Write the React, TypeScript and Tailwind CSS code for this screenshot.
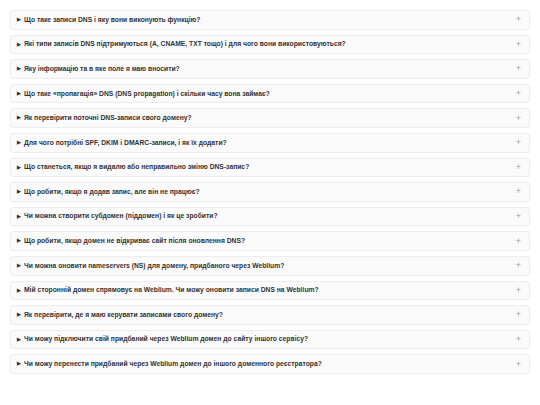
const questions = [
  'Що таке записи DNS і яку вони виконують функцію?',
  'Які типи записів DNS підтримуються (A, CNAME, TXT тощо) і для чого вони використовуються?',
  'Яку інформацію та в яке поле я маю вносити?',
  'Що таке «пропагація» DNS (DNS propagation) і скільки часу вона займає?',
  'Як перевірити поточні DNS-записи свого домену?',
  'Для чого потрібні SPF, DKIM і DMARC-записи, і як їх додати?',
  'Що станеться, якщо я видалю або неправильно зміню DNS-запис?',
  'Що робити, якщо я додав запис, але він не працює?',
  'Чи можна створити субдомен (піддомен) і як це зробити?',
  'Що робити, якщо домен не відкриває сайт після оновлення DNS?',
  'Чи можна оновити nameservers (NS) для домену, придбаного через Weblium?',
  'Мій сторонній домен спрямовує на Weblium. Чи можу оновити записи DNS на Weblium?',
  'Як перевірити, де я маю керувати записами свого домену?',
  'Чи можу підключити свій придбаний через Weblium домен до сайту іншого сервісу?',
  'Чи можу перенести придбаний через Weblium домен до іншого доменного реєстратора?',
];

export default function App() {
  return (
    <div className="min-h-screen bg-white p-[10px] font-['Liberation_Sans',Arial,sans-serif]">
      <div className="flex flex-col gap-[5px]">
        {questions.map((q) => (
          <div
            key={q}
            className="flex h-[19.6px] items-center justify-between rounded-[3px] border border-[#ededed] bg-[#fafafa] pl-[6px] pr-[8px]"
          >
            <div className="flex items-center gap-[3px] text-[6.75px] font-bold text-[#333333]">
              <span className="text-[5px]">▶</span>
              <span>{q}</span>
            </div>
            <span className="text-[9px] font-light leading-none text-[#9a9a9a]">+</span>
          </div>
        ))}
      </div>
    </div>
  );
}
